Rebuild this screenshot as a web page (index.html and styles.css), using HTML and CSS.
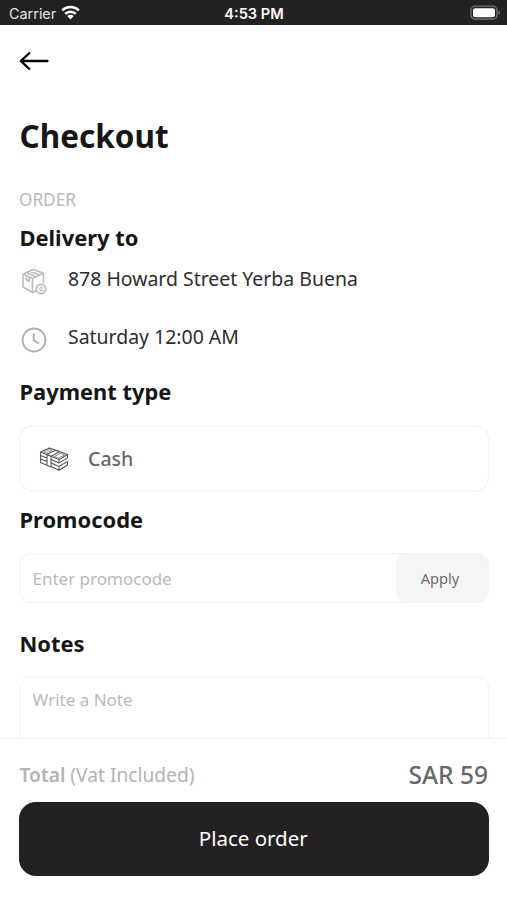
FILE: index.html
```html
<!DOCTYPE html>
<html lang="en">
<head>
<meta charset="utf-8">
<title>Checkout</title>
<link rel="stylesheet" href="styles.css">
</head>
<body>
<div class="app">
  <header class="status">
    <div class="carrier"><span>Carrier</span>
      <svg width="19" height="15" viewBox="0 0 19 15"><g fill="none" stroke="#fff" stroke-width="2.5"><path d="M1.2 5.4a12 12 0 0 1 16.6 0"/><path d="M4.2 8.8a7.6 7.6 0 0 1 10.6 0"/></g><path d="M6.3 11.1a4.6 4.6 0 0 1 6.4 0L9.5 14.4z" fill="#fff"/></svg>
    </div>
    <time>4:53 PM</time>
    <svg class="battery" width="31" height="16" viewBox="0 0 31 16"><rect x="1" y="1.2" width="26" height="13" rx="4" fill="none" stroke="#777577" stroke-width="1.3"/><rect x="3" y="3.2" width="22" height="9" rx="2" fill="#fff"/><path d="M28.5 5.6q3.4 2.1 0 4.2z" fill="#777577"/></svg>
  </header>
  <main class="content">
    <nav class="nav"><svg width="30" height="20" viewBox="0 0 30 20"><path d="M28.5 10H2M10.3 2.2L1.8 10l8.5 7.8" fill="none" stroke="#000" stroke-width="2.3" stroke-linecap="round" stroke-linejoin="round"/></svg></nav>
    <h1 class="title">Checkout</h1>
    <div class="label">ORDER</div>
    <h2 class="delivery">Delivery to</h2>
    <div class="info">
      <svg width="28" height="28" viewBox="0 0 28 28" fill="none" stroke="#bcbcbc" stroke-width="1.6" stroke-linejoin="round"><path d="M3 6L13.500 1.400l10 3.800v10M3 6v13l9.500 5.500 4-1.700M3 6l9.500 4.400 11-5.200M12.500 10.400v14.100M6.300 4.800l9.800 4M9.700 3.200l10 3.800M6.300 7.800v4l3 1.500V9.300"/><circle cx="21" cy="21" r="4.800" fill="#eee"/><path d="M22.300 19.500q-2.500-1.200-2.500 1.500t2.500 1.700" stroke-width="1"/></svg>
      <span>878 Howard Street Yerba Buena</span>
    </div>
    <div class="info">
      <svg width="28" height="28" viewBox="0 0 28 28" fill="none" stroke="#b3b3b3" stroke-width="2" stroke-linecap="round" stroke-linejoin="round"><circle cx="14" cy="14" r="11.500"/><path d="M13.700 8v6.200l4.500 3"/></svg>
      <span>Saturday 12:00 AM</span>
    </div>
    <h2 class="payment">Payment type</h2>
    <div class="card">
      <svg width="30" height="26" viewBox="0 0 30 26" fill="none" stroke="#555" stroke-width="1.050" stroke-linejoin="round"><path d="M1.500 6L10.500 2l18 6.500-8.500 5z" fill="#fff"/><path d="M8 8.300l8.500-4 4 1.400-8.500 4.500z" fill="#fff"/><path d="M8 8.300v11l4 1.700V10.200M1.500 6v10.500L8 19.300M1.500 9.500L8 12M1.500 13L8 15.600M12 13.600l8 3.300 8.500-4.900M12 17l8 3.400 8.500-4.900M12 20.500l8 3.700 8.500-5.200M20 13.500v3.400M28.500 8.500V12M28.500 15.500V19M20 20.400v3.800"/><path d="M4.500 6l6-2.500 2.500.8-6.200 2.700zM15.500 10.500l6-3.200 4 1.500-5.700 3.200z" stroke-width=".6"/></svg>
      <span>Cash</span>
    </div>
    <h2 class="promo-title">Promocode</h2>
    <div class="promo"><span>Enter promocode</span><button>Apply</button></div>
    <h2 class="notes-title">Notes</h2>
    <div class="notes">Write a Note</div>
  </main>
  <footer class="summary">
    <div class="total"><span><b>Total</b> (Vat Included)</span><strong>SAR 59</strong></div>
    <button class="place">Place order</button>
  </footer>
</div>
</body>
</html>
```
FILE: styles.css
```css
* { box-sizing: border-box; }
body { margin: 0; background: #fff; font-family: "Noto Sans", sans-serif; color: #161616; }
svg { display: block; flex: none; }
button { border: 0; padding: 0; font-family: inherit; }
.app { height: 900px; overflow: hidden; display: flex; flex-direction: column; }
.status { height: 25px; flex: none; background: #232122; color: #fff; display: grid; grid-template-columns: 1fr auto 1fr; align-items: center; padding: 2px 6px 0 9px; font: 14.400px/20px Inter, sans-serif; }
.carrier { display: flex; align-items: center; gap: 5px; color: #e4e4e4; }
.carrier svg { margin-top: -2px; }
.status time { font-weight: 600; font-size: 14.600px; margin-left: -2px; }
.battery { justify-self: end; margin-top: -1px; }
.content { flex: 1; min-height: 0; overflow: hidden; padding: 0 18.500px 0 19px; }
.nav { height: 91px; padding-top: 26px; }
h1, h2 { margin: 0; font-weight: 700; padding-left: 0.500px; }
.title { font-size: 31.500px; line-height: 40px; }
.label { margin-top: 31px; font-size: 17.200px; line-height: 24px; color: #b9b9b9; padding-top: 1px; }
h2 { font-size: 21.900px; line-height: 30px; }
.delivery { margin: 11px 0 6px; }
.info { height: 58px; display: flex; gap: 20px; padding-left: 1px; font-size: 19.450px; line-height: 40px; color: #2d2d2d; }
.info svg { margin-top: 9px; }
.payment { margin-top: 2px; }
.card { margin-top: 18px; height: 67px; border: 1px solid #f1f1f1; border-radius: 14px; display: flex; align-items: center; gap: 19px; padding-left: 19px; font-size: 19.500px; font-weight: 500; color: #686868; }
.promo-title { margin-top: 13px; }
.promo { margin-top: 18px; height: 50px; border: 1px solid #f1f1f1; border-radius: 12px; display: flex; align-items: center; justify-content: space-between; padding-left: 12.500px; font-size: 17px; color: #b9b9b9; }
.promo button { width: 93px; height: 50px; margin: -1px; border-radius: 12px; background: #f5f5f5; color: #6c6c6c; font-size: 14.700px; font-weight: 400; padding-right: 4px; }
.notes-title { margin-top: 26px; }
.notes { margin-top: 17px; height: 120px; border: 1px solid #f1f1f1; border-radius: 12px; padding: 10px 12.500px; font-size: 17px; line-height: 26px; color: #b9b9b9; }
.summary { height: 162px; flex: none; border-top: 1px solid #f0f0f0; padding: 15px 18.500px 24px 19px; background: #fff; }
.total { height: 40px; margin-bottom: 8px; display: flex; align-items: center; justify-content: space-between; color: #b3b3b3; font-size: 19.200px; padding: 1px 0.500px 0; }
.total b { font-weight: 600; }
.total strong { font-weight: 500; font-size: 24.500px; line-height: 32px; color: #686868; }
.place { display: block; width: 100%; height: 74px; border-radius: 17px; background: #232122; color: #fff; font-size: 20.500px; padding: 0 1px 2px 0; }
```
